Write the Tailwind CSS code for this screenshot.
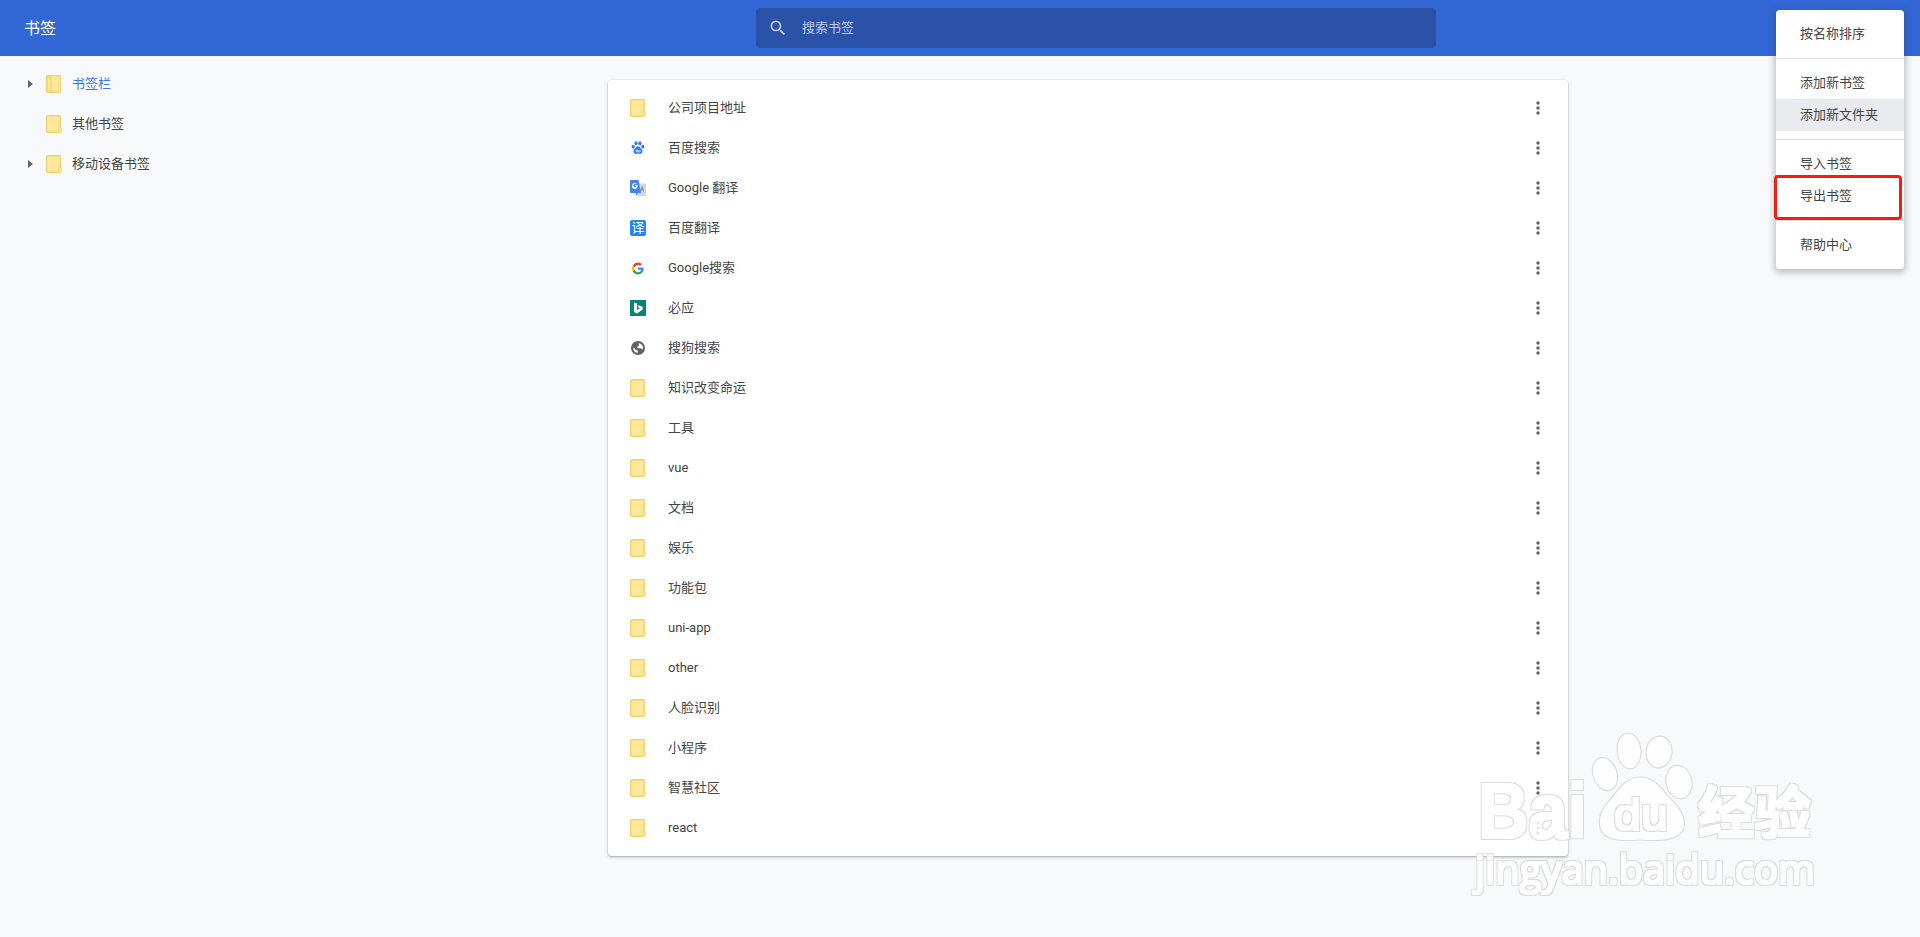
<!DOCTYPE html>
<html lang="zh-CN">
<head>
  <meta charset="UTF-8">
  <title>书签</title>
  <script src="https://cdn.jsdelivr.net/npm/@tailwindcss/browser@4"></script>
</head>
<body class="bg-[#f8f9fa] h-[937px] overflow-hidden text-[13px] text-[#444] font-['Roboto','Noto_Sans_CJK_SC',sans-serif]">
  <header class="h-14 bg-[#3367d6] flex items-center">
    <h1 class="w-[256px] pl-6 pt-0.5 text-base font-normal text-white">书签</h1>
    <div class="ml-[500px] w-[680px] h-10 rounded-sm bg-[#2a52a6] flex items-center pl-3 text-[#bccaea]">
      <svg class="w-5 h-5 mr-[14px]" viewBox="0 0 24 24" fill="#bccaea"><path d="M15.5 14h-.79l-.28-.27A6.471 6.471 0 0 0 16 9.5 6.5 6.5 0 1 0 9.5 16c1.61 0 3.09-.59 4.23-1.57l.27.28v.79l5 4.99L20.49 19l-4.99-5zm-6 0C7.01 14 5 11.99 5 9.5S7.01 5 9.5 5 14 7.01 14 9.5 11.99 14 9.5 14z"/></svg>
      <span>搜索书签</span>
    </div>
  </header>

  <div class="flex">
    <aside class="w-[256px] pt-2">
      <div class="h-10 flex items-center text-[#3b78e7]">
        <span class="ml-7 w-[18px]"><span class="block w-0 h-0 border-y-4 border-y-transparent border-l-[5px] border-l-[#5f6368]"></span></span>
        <svg class="w-4 h-[18px] mr-[10px]" viewBox="0 0 16 18"><rect x="0.700" y="0.700" width="13.600" height="16.600" rx="1" fill="#ffe89a" stroke="#f2d272" stroke-width="1.4"/><path d="M1 1c3 0 4 2 4 4.500v9c0 2-1 3-2.500 3S1 16 1 15z" fill="#ffe89a" stroke="#f2d272" stroke-width="1.400"/></svg>
        <span>书签栏</span>
      </div>
      <div class="h-10 flex items-center">
        <span class="ml-7 w-[18px]"></span>
        <svg class="w-4 h-[18px] mr-[10px]" viewBox="0 0 16 18"><use href="#folder"/></svg>
        <span>其他书签</span>
      </div>
      <div class="h-10 flex items-center">
        <span class="ml-7 w-[18px]"><span class="block w-0 h-0 border-y-4 border-y-transparent border-l-[5px] border-l-[#5f6368]"></span></span>
        <svg class="w-4 h-[18px] mr-[10px]" viewBox="0 0 16 18"><use href="#folder"/></svg>
        <span>移动设备书签</span>
      </div>
    </aside>

    <main class="ml-[352px] mt-6 w-[960px] bg-white rounded py-2 shadow-[0_1px_2px_rgba(60,64,67,0.3),0_1px_3px_1px_rgba(60,64,67,0.15)]" id="list"></main>
  </div>

  <!-- dropdown menu -->
  <div class="absolute left-[1776px] top-[10px] w-[128px] bg-white rounded py-2 shadow-[0_2px_6px_2px_rgba(60,64,67,0.3)]">
    <div class="h-8 pl-6 flex items-center">按名称排序</div>
    <hr class="my-2 border-[#e0e0e0]">
    <div class="h-8 pl-6 flex items-center">添加新书签</div>
    <div class="h-8 pl-6 flex items-center bg-[#e8eaed]">添加新文件夹</div>
    <hr class="my-2 border-[#e0e0e0]">
    <div class="h-8 pl-6 flex items-center">导入书签</div>
    <div class="h-8 pl-6 flex items-center">导出书签</div>
    <hr class="my-2 border-[#e0e0e0]">
    <div class="h-8 pl-6 flex items-center">帮助中心</div>
  </div>

  <!-- red annotation box -->
  <div class="absolute left-[1774px] top-[175px] w-[128px] h-[45px] border-[3px] border-[#fb1a12] rounded-sm"></div>

  <!-- watermark -->
  <svg class="absolute left-[1440px] top-[700px] blur-[0.4px]" width="400" height="237" viewBox="0 0 400 237">
    <defs>
      <filter id="hollow" x="-5%" y="-10%" width="110%" height="120%">
        <feMorphology in="SourceAlpha" operator="dilate" radius="2" result="outer"/>
        <feFlood flood-color="#d6d7d8"/>
        <feComposite in2="outer" operator="in" result="edge"/>
        <feMorphology in="SourceAlpha" operator="dilate" radius="1" result="inner"/>
        <feFlood flood-color="#ffffff"/>
        <feComposite in2="inner" operator="in" result="body"/>
        <feMerge><feMergeNode in="edge"/><feMergeNode in="body"/></feMerge>
      </filter>
    </defs>
    <g opacity="0.85">
      <g fill="#ffffff" stroke="#d6d7d8" stroke-width="1.200">
        <ellipse cx="165" cy="74" rx="12" ry="17" transform="rotate(-18 165 74)"/>
        <ellipse cx="189" cy="51" rx="12" ry="18" transform="rotate(-5 189 51)"/>
        <ellipse cx="219" cy="52" rx="13" ry="16" transform="rotate(8 219 52)"/>
        <ellipse cx="239" cy="82" rx="13" ry="17" transform="rotate(-12 239 82)"/>
        <path d="M200 77C185 77 178 90 170 100C160 110 158 120 160 128C163 140 178 142 200 140C222 142 240 140 244 128C246 118 240 108 232 100C222 90 216 77 200 77Z"/>
      </g>
      <g fill="#ffffff" filter="url(#hollow)">
        <text x="38" y="138" font-family="Liberation Sans" font-weight="700" font-size="78" textLength="109" lengthAdjust="spacingAndGlyphs">Bai</text>
        <text x="174" y="130" font-family="Liberation Sans" font-size="44" textLength="54" lengthAdjust="spacingAndGlyphs">du</text>
        <text x="258" y="133" font-family="Noto Sans CJK SC" font-weight="700" font-size="56" textLength="113" lengthAdjust="spacingAndGlyphs">经验</text>
        <text x="35" y="184" font-family="Open Sans" font-size="40" textLength="340" lengthAdjust="spacingAndGlyphs">jingyan.baidu.com</text>
      </g>
    </g>
  </svg>

  <svg class="hidden">
    <defs>
      <g id="folder">
        <rect x="0.700" y="0.700" width="13.600" height="16.600" rx="1" fill="#ffe89a" stroke="#f2d272" stroke-width="1.4"/>
        <rect x="12.800" y="12.500" width="2.500" height="4.800" rx="1" fill="#ffe89a" stroke="#f2d272"/>
      </g>
    </defs>
  </svg>

  <script>
    const folder = `<svg class="w-4 h-[18px]" viewBox="0 0 16 18"><use href="#folder"/></svg>`;

    const baidu = `<svg class="w-[14px] h-[14px]" viewBox="0 0 16 16" fill="#2f7bf5"><ellipse cx="2.500" cy="6.500" rx="1.800" ry="2.200"/><ellipse cx="5.800" cy="2.700" rx="1.800" ry="2.300"/><ellipse cx="10.200" cy="2.700" rx="1.800" ry="2.300"/><ellipse cx="13.500" cy="6.500" rx="1.800" ry="2.200"/><path d="M8 6c-2 0-2.500 2-4 3.200-1.800 1.500-1.500 5.600 1.500 5.600 1 0 1.700-.4 2.500-.4s1.500.4 2.500.4c3 0 3.300-4.100 1.500-5.600C10.500 8 10 6 8 6z"/><path d="M6 10v2.500h1.200V9.500M8.800 10.500v2h1.600v-2" fill="none" stroke="#fff" stroke-width=".8"/></svg>`;

    const translate = `<svg class="w-4 h-4" viewBox="0 0 16 16"><rect x="8" y="3.500" width="8" height="12.500" fill="#d5d7da"/><path d="M11.500 6.500l-1.500 5h1l.4-1h1.400l.4 1h1l-1.600-5z" fill="#8d9094"/><path d="M1 0h7.500l2.500 13H8l-1.500 3-1-3H1a1 1 0 0 1-1-1V1a1 1 0 0 1 1-1z" fill="#4285f4"/><path d="M5 9a3 3 0 0 1 0-6c.7 0 1.300.2 1.800.700l-.7.700a1.600 1.600 0 1 0 .4 1.700H5V5.300h2.700c.2 2-.9 3.700-2.700 3.700z" fill="#fff"/></svg>`;

    const yi = `<span class="w-4 h-4 rounded-[2px] bg-[#1e88f0] text-white text-[13px] leading-4 text-center">译</span>`;

    const google = `<svg class="w-3 h-[13px]" viewBox="0 0 48 48"><path fill="#EA4335" d="M24 9.500c3.500 0 6.700 1.200 9.200 3.600l6.900-6.900C35.900 2.400 30.500 0 24 0 14.600 0 6.500 5.400 2.600 13.200l8 6.200C12.400 13.700 17.700 9.500 24 9.500z"/><path fill="#4285F4" d="M46.500 24.500c0-1.600-.1-3.100-.4-4.500H24v9h12.700c-.6 3-2.200 5.500-4.700 7.200l7.700 6c4.500-4.200 6.800-10.300 6.800-17.700z"/><path fill="#FBBC05" d="M10.500 28.600c-.5-1.400-.8-3-.8-4.600s.3-3.200.8-4.600l-8-6.200C.9 16.500 0 20.100 0 24s.9 7.500 2.600 10.800l7.900-6.200z"/><path fill="#34A853" d="M24 48c6.500 0 11.900-2.100 15.900-5.800l-7.700-6c-2.200 1.400-4.900 2.300-8.100 2.300-6.300 0-11.600-4.200-13.500-9.900l-8 6.200C6.500 42.600 14.600 48 24 48z"/></svg>`;

    const bing = `<svg class="w-4 h-4" viewBox="0 0 16 16"><rect width="16" height="16" fill="#0a8377"/><path d="M4 2.500l3 1v6.500l3-1.800-1.600-.8-.8-2.400 5 1.800v2.700L7 13.500 4 12z" fill="#fff"/></svg>`;

    const globe = `<svg class="w-[14px] h-[14px]" viewBox="0 0 14 14"><circle cx="7" cy="7" r="7" fill="#5f6368"/><path d="M7.500 2.200c2 0 3.800 1.400 4.300 3.400.3 1.200 0 2.200-.6 3.100-.4-.9-1-1.500-2-1.500H7.300L6 6.500l.8-1.400 1.400-.3z" fill="#fff"/><path d="M2.300 6.500l2.500 2.300 1.700.5.500 2.500c-2.500.2-4.600-1.700-4.800-4.100z" fill="#fff"/></svg>`;

    const rows = [
      ["公司项目地址", folder], ["百度搜索", baidu], ["Google 翻译", translate], ["百度翻译", yi],
      ["Google搜索", google], ["必应", bing], ["搜狗搜索", globe], ["知识改变命运", folder],
      ["工具", folder], ["vue", folder], ["文档", folder], ["娱乐", folder], ["功能包", folder],
      ["uni-app", folder], ["other", folder], ["人脸识别", folder], ["小程序", folder],
      ["智慧社区", folder], ["react", folder],
    ];

    document.getElementById("list").innerHTML = rows.map(([title, icon]) => `
      <div class="h-10 flex items-center pl-[22px] pr-[28px]">
        <span class="w-4 mr-[22px] flex justify-center">${icon}</span>
        <span class="flex-1">${title}</span>
        <svg class="w-1 h-[14px]" viewBox="0 0 4 14" fill="#5f6368"><circle cx="2" cy="2" r="1.700"/><circle cx="2" cy="7" r="1.700"/><circle cx="2" cy="12" r="1.700"/></svg>
      </div>`).join("");
  </script>
</body>
</html>
